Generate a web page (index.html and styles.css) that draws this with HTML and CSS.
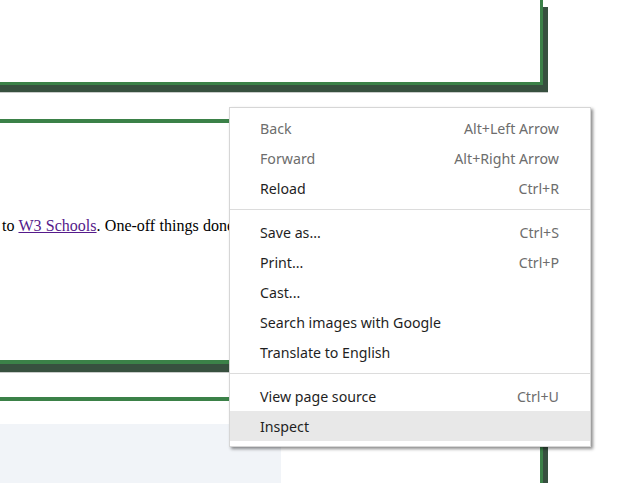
FILE: index.html
```html
<!DOCTYPE html>
<html lang="en">
<head>
<meta charset="utf-8">
<title>Context menu</title>
<link rel="stylesheet" href="styles.css">
</head>
<body>
<div class="page">
  <div class="box box-top"></div>
  <div class="box box-mid">
    <p class="line">to <a href="#" class="visited">W3 Schools</a>. One-off things done quickly are welcome here too.</p>
  </div>
  <div class="box box-low">
    <div class="code-area"></div>
  </div>
</div>

<div class="menu">
  <div class="item disabled"><span>Back</span><span class="key">Alt+Left Arrow</span></div>
  <div class="item disabled"><span>Forward</span><span class="key">Alt+Right Arrow</span></div>
  <div class="item"><span>Reload</span><span class="key">Ctrl+R</span></div>
  <div class="sep"></div>
  <div class="item"><span>Save as...</span><span class="key">Ctrl+S</span></div>
  <div class="item"><span>Print...</span><span class="key">Ctrl+P</span></div>
  <div class="item"><span>Cast...</span></div>
  <div class="item"><span>Search images with Google</span></div>
  <div class="item"><span>Translate to English</span></div>
  <div class="sep"></div>
  <div class="item"><span>View page source</span><span class="key">Ctrl+U</span></div>
  <div class="item hover"><span>Inspect</span></div>
</div>
</body>
</html>
```

FILE: styles.css
```css
html, body {
  margin: 0;
  padding: 0;
  background: #ffffff;
  overflow: hidden;
}

body {
  width: 622px;
  height: 483px;
  position: relative;
}

.page {
  display: flex;
  flex-direction: column;
  margin-left: -20px;
}

.box {
  width: 560px;
  background: #ffffff;
  border: 0 solid #3b8148;
}

.box-top {
  height: 82px;
  border-right-width: 3px;
  border-bottom-width: 3px;
  box-shadow: 5px 7px 0 #37503f, 5px 8px 0 #c9ccca;
}

.box-mid {
  margin-top: 34px;
  height: 237px;
  border-top-width: 4px;
  border-bottom-width: 4px;
  border-right-width: 3px;
  box-shadow: 5px 8px 0 #37503f, 5px 9px 0 #c9ccca;
}

.line {
  margin: 0;
  padding-top: 94px;
  padding-left: 22px;
  width: 227px;
  font-family: "Liberation Serif", "Times New Roman", serif;
  font-size: 16px;
  word-spacing: 0.3px;
  color: #000000;
  white-space: nowrap;
  overflow: hidden;
}

.visited {
  color: #551a8b;
  text-decoration: underline;
}

.box-low {
  margin-top: 33px;
  height: 59px;
  border-top-width: 4px;
  border-right-width: 3px;
  box-shadow: 5px 0 0 #37503f;
  padding-top: 23px;
}

.code-area {
  width: 301px;
  height: 59px;
  background: #f1f4f8;
}

.menu {
  position: absolute;
  left: 229px;
  top: 107px;
  width: 360px;
  padding: 5px 0 5px;
  background: #ffffff;
  border: 1px solid #d6d6d6;
  box-shadow: 2px 2px 3px rgba(0, 0, 0, 0.45);
  font-family: "Noto Sans", "Open Sans", sans-serif;
  font-size: 14.2px;
  color: #1f1f1f;
}

.item {
  height: 30px;
  display: flex;
  align-items: center;
  justify-content: space-between;
  padding: 0 31px 0 30px;
}

.item.disabled {
  color: #6d6d6d;
}

.key {
  color: #6d6d6d;
}

.item.hover {
  background: #e8e8e8;
}

.sep {
  height: 1px;
  background: #dcdcdc;
  margin: 6px 0 7px;
}
```
